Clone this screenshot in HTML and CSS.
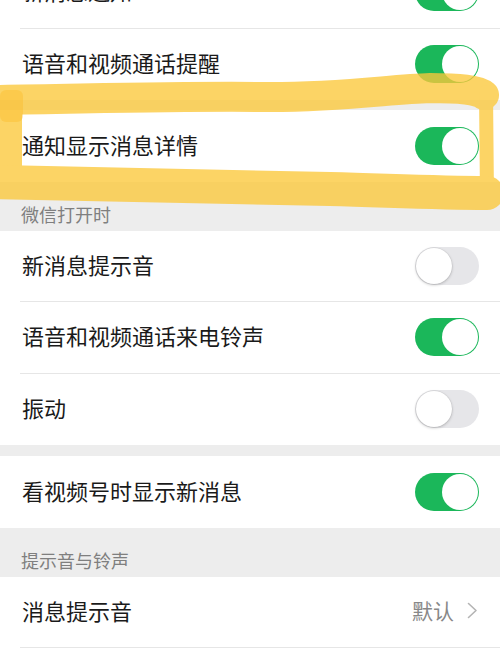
FILE: index.html
```html
<!DOCTYPE html>
<html lang="zh-CN">
<head>
  <meta charset="UTF-8" />
  <meta name="viewport" content="width=device-width, initial-scale=1" />
  <title>新消息通知</title>
  <link rel="stylesheet" href="styles.css">
</head>
<body>
  <div class="page">
    <div class="group first">
      <div class="row">
        <div class="row-inner">
          <span class="label">新消息通知</span>
          <span class="switch on"></span>
        </div>
      </div>
      <div class="row">
        <div class="row-inner">
          <span class="label">语音和视频通话提醒</span>
          <span class="switch on"></span>
        </div>
      </div>
    </div>

    <div class="group gap">
      <div class="row">
        <div class="row-inner">
          <span class="label">通知显示消息详情</span>
          <span class="switch on"></span>
        </div>
      </div>
    </div>

    <div class="section-title">微信打开时</div>
    <div class="group">
      <div class="row">
        <div class="row-inner">
          <span class="label">新消息提示音</span>
          <span class="switch"></span>
        </div>
      </div>
      <div class="row">
        <div class="row-inner">
          <span class="label">语音和视频通话来电铃声</span>
          <span class="switch on"></span>
        </div>
      </div>
      <div class="row">
        <div class="row-inner">
          <span class="label">振动</span>
          <span class="switch"></span>
        </div>
      </div>
    </div>

    <div class="group gap-lg">
      <div class="row">
        <div class="row-inner">
          <span class="label">看视频号时显示新消息</span>
          <span class="switch on"></span>
        </div>
      </div>
    </div>

    <div class="section-title">提示音与铃声</div>
    <div class="group">
      <div class="row">
        <div class="row-inner">
          <span class="label">消息提示音</span>
          <span class="value">默认</span>
          <svg class="chevron" width="11" height="17" viewBox="0 0 11 17">
            <path d="M1.5 1.5 L9 8.5 L1.5 15.5" fill="none" stroke="#b4b4b4" stroke-width="1.6" stroke-linecap="round" stroke-linejoin="round"/>
          </svg>
        </div>
      </div>
      <div class="row">
        <div class="row-inner"></div>
      </div>
    </div>

    <!-- highlighter scribble drawn over the screenshot -->
    <svg class="marker" width="500" height="230" viewBox="0 0 500 230">
      <g opacity="0.78" fill="none" stroke="#fcc83a" stroke-linecap="round" stroke-linejoin="round">
        <path d="M11 98 L11 166" stroke-width="22"/>
        <path d="M-6 100 C 80 99, 180 96, 260 97 C 340 98, 390 89, 430 88 C 460 88, 478 90, 484 95" stroke-width="30"/>
        <path d="M486 92 L487 198" stroke-width="14"/>
        <path d="M487 193 C 440 193, 400 191, 330 189 C 250 187, 150 186, -6 182" stroke-width="34"/>
      </g>
      <rect x="0" y="90" width="23" height="32" rx="6" fill="#fbb820" opacity="0.35"/>
    </svg>
  </div>
</body>
</html>
```

FILE: styles.css
```css
body {
  margin: 0;
  background: #ededed;
  font-family: "Noto Sans CJK SC", "Noto Sans", sans-serif;
  color: #1a1a1a;
  overflow: hidden;
}
.page {
  position: relative;
  width: 500px;
  height: 666px;
  overflow: hidden;
}
.group {
  background: #fff;
}
.group.first {
  margin-top: -43px;
}
.group.gap {
  margin-top: 10px;
}
.group.gap-lg {
  margin-top: 11px;
}
.row {
  padding-left: 20px;
}
.row-inner {
  display: flex;
  align-items: center;
  height: 71.5px;
  box-sizing: border-box;
  padding-right: 21px;
  border-bottom: 1px solid #e6e6e6;
}
.row:last-child .row-inner {
  border-bottom: none;
}
.label {
  flex: 1;
  font-size: 22px;
  line-height: 30px;
  padding-left: 2px;
  margin-top: -4px;
}
.section-title {
  display: flex;
  align-items: flex-end;
  height: 49px;
  box-sizing: border-box;
  padding: 0 0 5px 21px;
  font-size: 18px;
  line-height: 24px;
  color: #7f7f7f;
}
.value {
  font-size: 21px;
  color: #888;
  margin-right: 13px;
  margin-top: -4px;
}
.chevron {
  display: block;
  margin-right: 1px;
  margin-top: -3px;
}
.switch {
  position: relative;
  width: 64px;
  height: 38px;
  box-sizing: border-box;
  border-radius: 19px;
  background: #e6e6e9;
  flex-shrink: 0;
}
.switch::after {
  content: "";
  position: absolute;
  top: 1px;
  left: 1px;
  width: 36px;
  height: 36px;
  border-radius: 50%;
  background: #fff;
  box-shadow: 0 1px 3px rgba(0, 0, 0, 0.22), 0 0 0 0.5px rgba(0, 0, 0, 0.08);
}
.switch.on {
  background: #1bb75a;
}
.switch.on::after {
  left: 27px;
  box-shadow: none;
}
.marker {
  position: absolute;
  top: 0;
  left: 0;
  pointer-events: none;
}
```
